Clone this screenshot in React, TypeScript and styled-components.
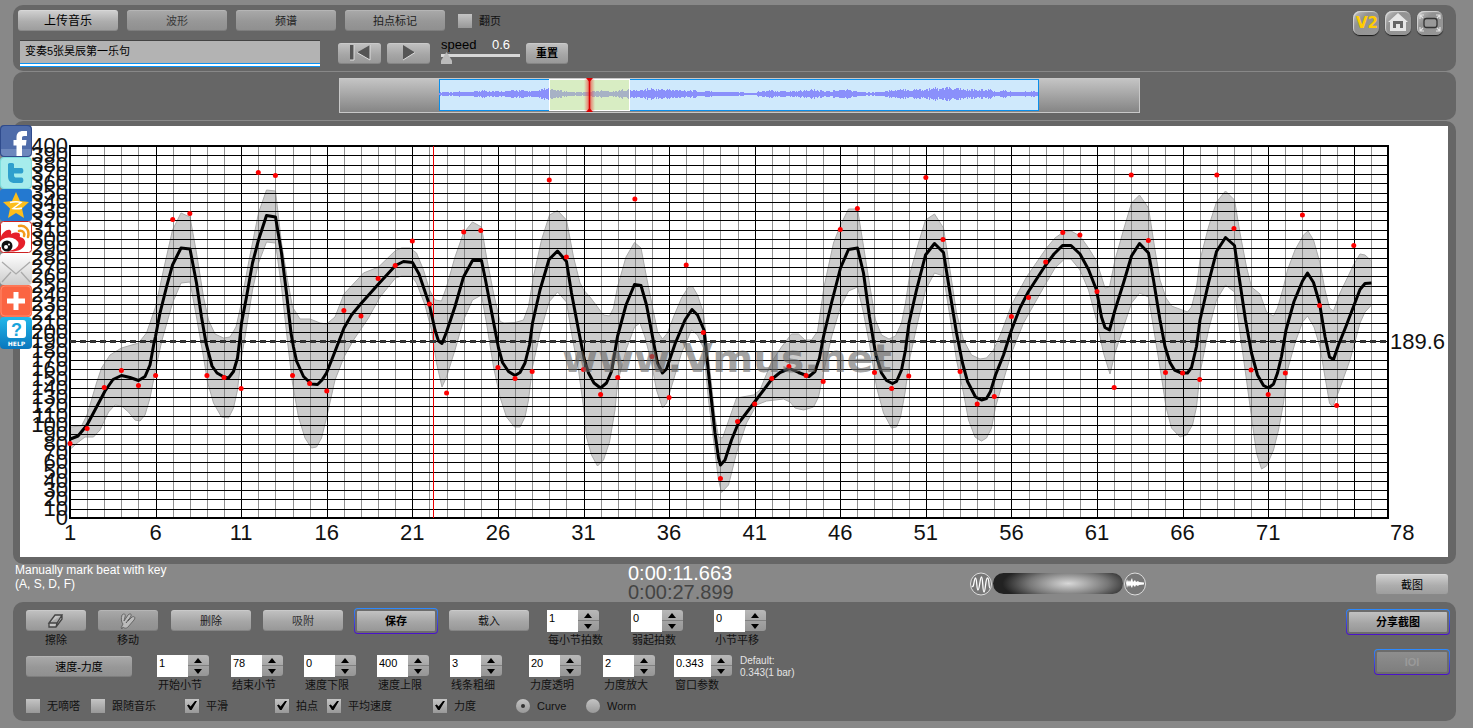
import React, { useState } from "react";
import styled, { createGlobalStyle, css } from "styled-components";

const GlobalStyle = createGlobalStyle`
  * { box-sizing: border-box; }
  body {
    margin: 0;
    background: #888;
    color: #000;
    font: 11px/16px "Liberation Sans", "Noto Sans CJK SC", sans-serif;
  }
  button, input { font: inherit; color: inherit; margin: 0; padding: 0; }
`;

/* ---------- layout ---------- */

const Page = styled.main`
  position: relative;
  display: flex;
  flex-direction: column;
  gap: 1px;
  padding: 5px 17px 7px 13px;
`;

const Panel = styled.section`
  background: #666;
  border-radius: 10px;
`;

const TopPanel = styled(Panel)`
  display: flex;
  justify-content: space-between;
  height: 66px;
  padding: 5px 13px 0 5px;
`;

const ToolRows = styled.div`
  display: flex;
  flex-direction: column;
  gap: 8px;
`;

const TabRow = styled.div`
  display: flex;
  align-items: center;
  gap: 9px;
`;

const PlayerRow = styled.div`
  display: flex;
  align-items: center;
  gap: 6px;
  height: 28px;
  padding-left: 2px;
`;

/* ---------- controls ---------- */

type Tone = "bright" | "normal" | "dim" | "off";

const tones: Record<Tone, string> = {
  bright: "linear-gradient(#d2d2d2, #adadad 55%, #9c9c9c)",
  normal: "linear-gradient(#c2c2c2, #a6a6a6 55%, #979797)",
  dim: "linear-gradient(#aaa, #979797 55%, #8f8f8f)",
  off: "linear-gradient(#8e8e8e, #7e7e7e)",
};

const Button = styled.button<{ $w: number; $tone?: Tone; $ink?: string; $halo?: boolean; $size?: number }>`
  display: flex;
  align-items: center;
  justify-content: center;
  flex: none;
  width: ${(p) => p.$w}px;
  height: 21px;
  border: 0;
  border-radius: 3px;
  background: ${(p) => tones[p.$tone ?? "normal"]};
  box-shadow: inset 0 1px 0 rgba(255, 255, 255, 0.15), inset 0 -1px 0 rgba(0, 0, 0, 0.12);
  color: ${(p) => p.$ink ?? "#000"};
  font-size: ${(p) => p.$size ?? 11}px;
  ${(p) =>
    p.$halo &&
    css`
      font-weight: bold;
      border: 2px solid #6c6c6c;
      height: 24px;
      background-clip: padding-box;
      background-origin: padding-box;
    `}
`;

const Halo = styled.span`
  display: flex;
  width: max-content;
  padding: 1px;
  border-radius: 4px;
  background: linear-gradient(#2d8cff, #4a10c8);
  ${Button} { border-radius: 3px; background-color: #6c6c6c; box-shadow: none; background-clip: border-box; }
`;

const Check = styled.input`
  position: relative;
  flex: none;
  appearance: none;
  width: 14px;
  height: 14px;
  background: linear-gradient(#c4c4c4, #989898);
  &:checked::before {
    content: "";
    position: absolute;
    inset: 2px 2px 3px 2px;
    background: #000;
    clip-path: polygon(0 48%, 18% 40%, 36% 62%, 80% 0, 100% 0, 46% 100%, 30% 100%);
  }
`;

const TurnCheck = styled(Check)`
  margin-left: 4px;
`;

const Radio = styled(Check)`
  border-radius: 50%;
  &:checked::before {
    inset: 5px;
    border-radius: 50%;
    background: #333;
    clip-path: none;
  }
`;

const CheckLabel = styled.label`
  display: flex;
  align-items: center;
  gap: 7px;
  line-height: 14px;
  white-space: nowrap;
  color: #111;
`;

const TitleInput = styled.input`
  width: 300px;
  height: 27px;
  margin-right: 12px;
  padding: 0 5px 7px;
  border: 0;
  border-top: 1px solid #444;
  background: linear-gradient(#b3b3b3 22px, #0a93f5 22px 23px, #fff 23px 25px, #0a93f5 25px);
`;

const SpeedBox = styled.div`
  display: flex;
  flex-direction: column;
  width: 79px;
  height: 30px;
  margin-left: 5px;
`;

const SpeedHead = styled.label`
  display: flex;
  justify-content: space-between;
  padding-right: 10px;
  font-size: 13px;
  line-height: 14px;
  output { color: #fff; }
`;

const SpeedRange = styled.input`
  appearance: none;
  width: 100%;
  height: 12px;
  background: linear-gradient(transparent 2px, #d8d8d8 2px 5px, transparent 5px);
  &::-webkit-slider-thumb {
    appearance: none;
    width: 11px;
    height: 12px;
    background: #bbb;
    clip-path: polygon(50% 0, 100% 70%, 100% 100%, 0 100%, 0 70%);
  }
`;

const CornerTools = styled.div`
  display: flex;
  gap: 6px;
  padding-top: 1px;
`;

const CornerButton = styled.button`
  width: 26px;
  height: 24px;
  border: 0;
  border-radius: 7px;
  background: linear-gradient(135deg, #c4c4c4, #929292 35%, #979797);
  box-shadow: 0 1px 1px #151515, inset 1px 1px 1px #d5d5d5;
  svg { display: block; }
`;

/* ---------- overview strip ---------- */

const OverviewPanel = styled(Panel)`
  display: flex;
  justify-content: center;
  height: 48px;
  padding: 6px 0 0 10px;
`;

const Overview = styled.div`
  width: 801px;
  height: 35px;
  padding-left: 99px;
  border: 1px solid #c8c8c8;
  background: linear-gradient(#c4c4c4, #858585);
  svg { display: block; overflow: visible; }
`;

/* ---------- chart ---------- */

const ChartPanel = styled(Panel)`
  padding: 5px 8px 7px 7px;
`;

const ChartSvg = styled.svg`
  display: block;
  width: 100%;
  background: #fff;
  font-family: "Liberation Sans", sans-serif;
`;

/* ---------- status bar ---------- */

const StatusBar = styled.div`
  display: grid;
  grid-template-columns: 613px 342px 1fr auto;
  height: 36px;
  padding: 0 8px 0 2px;
`;

const Hint = styled.p`
  margin: -2px 0 0;
  color: #fff;
  font-size: 12px;
  line-height: 14px;
`;

const Clock = styled.div`
  margin-top: -1px;
  color: #fff;
  font-size: 20px;
  line-height: 19px;
  div + div { color: #444; }
`;

const Zoomer = styled.div`
  display: flex;
  align-items: center;
  gap: 1px;
`;

const ZoomRange = styled.input`
  appearance: none;
  width: 130px;
  height: 21px;
  border-radius: 11px;
  background: radial-gradient(ellipse 66px 20px at 58% 50%, #d8d8d8, #777 60%, #222);
  &::-webkit-slider-thumb { appearance: none; width: 1px; height: 1px; }
`;

const SnapSlot = styled.div`
  padding-top: 9px;
`;

/* ---------- bottom panel ---------- */

const BottomPanel = styled(Panel)`
  display: flex;
  justify-content: space-between;
  height: 119px;
  padding: 8px 6px 0 13px;
`;

const ControlRows = styled.div`
  display: grid;
  grid-template-rows: 45px 44px 14px;
`;

const ActionRow = styled.div`
  display: grid;
  grid-template-columns: 72px 73px 92px 91px 95px 98px 84px 83px 52px;
`;

const ParamRow = styled.div`
  display: grid;
  grid-template-columns: 131px 74px 73px 73px 73px 79px 74px 71px 66px 70px;
  > button { margin-top: 1px; }
`;

const OptionRow = styled.div`
  display: grid;
  grid-template-columns: 65px 94px 90px 52px 106px 83px 70px 60px;
`;

const ToolStack = styled.label`
  display: flex;
  flex-direction: column;
  align-items: center;
  gap: 1px;
  width: 60px;
  color: #111;
`;

const HaloCell = styled.div`
  margin-top: -2px;
`;

const Field = styled.label`
  display: flex;
  flex-direction: column;
  color: #111;
  white-space: nowrap;
  > span:last-child { padding-left: 1px; }
`;

const SpinBody = styled.span`
  display: flex;
  height: 22px;
`;

const SpinInput = styled.input<{ $w: number }>`
  width: ${(p) => p.$w}px;
  height: 22px;
  padding: 0 0 6px 2px;
  border: 0;
  background: #fff;
  color: #000;
`;

const SpinKeys = styled.span`
  display: flex;
  flex-direction: column;
  width: 21px;
  height: 21px;
`;

const SpinKey = styled.button<{ $down?: boolean }>`
  display: flex;
  align-items: center;
  justify-content: center;
  height: ${(p) => (p.$down ? 11 : 10)}px;
  padding-right: 1px;
  border: 0;
  border-radius: ${(p) => (p.$down ? "0 0 3px 0" : "0 3px 0 0")};
  background: ${(p) => (p.$down ? "linear-gradient(#a3a3a3, #969696)" : "linear-gradient(#b8b8b8, #a8a8a8)")};
  border-top: ${(p) => (p.$down ? "1px solid #808080" : "0")};
`;

const DefaultNote = styled.p`
  margin: 0;
  color: #e4e4e4;
  font-size: 10px;
  line-height: 12px;
`;

const ShareColumn = styled.div`
  display: flex;
  flex-direction: column;
  align-items: flex-end;
  gap: 14px;
  margin-top: -1px;
`;

/* ---------- social links ---------- */

const SocialBar = styled.nav`
  position: absolute;
  left: 0;
  top: 125px;
  display: flex;
  flex-direction: column;
`;

const SocialLink = styled.a`
  display: block;
  width: 32px;
  height: 32px;
  svg { display: block; }
`;

/* ---------- chart data ---------- */

const curve =
  "70.5,439 78,436 87,425 95,410 105,391 113,379.5 121.5,375.5 130,377.5 138.5,380.5 145,376.5 150,365 154,343 155.5,336.5 160,313 166.5,287 172.5,265 181,248 190,249 196.5,283 201.5,317 206,343 212,366 217,373 224,377 228.5,378 233.5,371.5 237.5,358 239.5,342 241.5,323 246.5,297 252.5,263 258.5,240 266.5,215.5 275.5,217 281.5,253 286.5,293 291,333 293.5,347 296.5,361 303.5,376.5 311.5,384 317.5,384.5 322,380 326.5,373 335,351.5 344,328 351.5,315 361.5,303 378.5,284 395.5,265.5 403.5,261.5 412.5,262.5 419,274 429.5,305 435,330 438.5,341 442,343.5 446.5,332 455,306.5 463.5,277 472.5,260.5 481.5,260.5 485.5,280 491.5,311.5 498.5,348 502.5,362.5 508.5,371.5 515,375.5 520,372.5 525,363 529.5,345 532.5,323 540,290 549,259.5 557.5,251 566.5,261.5 571.5,293 578.5,330 584,358 588.5,373 594,383 600.5,388 606.5,383 611.5,371.5 617.5,336.5 626,305 634.5,284.5 641,285.5 646.5,305 652.5,336.5 657.5,363 662.5,373 666.5,369 675,344 685,320 692,309.5 697.5,315 704,330 710,387 715,433 718.5,458 720.5,465 725,460 731.5,440 738,424 755,401.5 771.5,379.5 780,372.5 789.5,368.5 798.5,372.5 809,376.5 815,371.5 819.5,358 823.5,336.5 831.5,303 840.5,268 848.5,249.5 857.5,248 863.5,273 869.5,317 875.5,353 881.5,373 886.5,380.5 892.5,383.5 896.5,381.5 901.5,370 905.5,350 909,323 916.5,290 925.5,255 934.5,243.5 943.5,252.5 950,293 956.5,333 962.5,363 967.5,381.5 975.5,397 981.5,400 986.5,398.5 990.5,391.5 995.5,375 1003.5,355 1011.5,330 1020,308 1028.5,291.5 1045,266 1054,254 1062.5,245.5 1071,245.5 1080,254 1088.5,269.5 1096.5,290 1101.5,317 1105,327.5 1109.5,330 1115,310 1123.5,283 1131.5,256 1139.5,243.5 1148.5,253 1153.5,280 1160,320 1165,346.5 1170,362.5 1174.5,370 1181.5,373 1187.5,373 1191.5,367.5 1196.5,346.5 1200,320 1208.5,283 1216.5,251.5 1225.5,237.5 1234.5,245.5 1240,283 1245.5,320 1251.5,353 1257.5,375 1263.5,385.5 1268.5,388 1273.5,384 1277.5,373 1281.5,356.5 1286,330 1294,301.5 1302.5,281 1307.5,273 1313.5,282.5 1319.5,303 1325,336.5 1329.5,357 1333.5,359.5 1338.5,345 1346.5,325 1360,289.5 1365,283.5 1371.5,283";

const bandTop =
  "70.5,427 81.5,426 87,415 96.5,383 101.5,368 110,355 121.5,348 138.5,343 146.5,333 155.5,307 163.5,270 172.5,230 181,213 190,217 196.5,253 203.5,297 208.5,320 215,334 223.5,338 230,337 236,327 240.5,307 248.5,263 258.5,213 266.5,190 275.5,191 281.5,243 287.5,280 292.5,307 300,319 310,319 320,323 326.5,324 335,317 344,294 363.5,273 378.5,267 395.5,250.5 401.5,248 410,248 416.5,253 423.5,270 429.5,290 435,300 441.5,301 446.5,287 455,257 463.5,233 472.5,222 481.5,227 486.5,257 493.5,293 500,321.5 504,323 515,322.5 523.5,320 528.5,306.5 533.5,276.5 541.5,240 549.5,215 557.5,210.5 566.5,220 573.5,257 580,283 584,290.5 590,297 603.5,315 609.5,316 613.5,308 617.5,287 626,257 634.5,242.5 641,248 646.5,277 652.5,307 657.5,331.5 662.5,339 667.5,333 673.5,317 681.5,298 688.5,287 692.5,286.5 697.5,295 703.5,313 708.5,357 715,417 718.5,437 722.5,438 728.5,421 736.5,398 753.5,395 760,390 771.5,362 781.5,347 791.5,334 798.5,334 805,340 811.5,340 817.5,331.5 824,287 833.5,243 840.5,225 848.5,209 857.5,209 862.5,240 870,287 875.5,320 881.5,335 889,339 895.5,336 901.5,323 905.5,303 910,273 918.5,243 925.5,220 934.5,214 943.5,228 950,270 956.5,313 963.5,340 971.5,355 980,359 986.5,358 993.5,350 1001.5,332 1011.5,305 1026.5,277 1046.5,248 1055,238 1063.5,232 1071,231 1080,236 1088.5,248 1096.5,261 1105,288 1109.5,287 1115,260 1123.5,230 1131.5,203 1139.5,195 1148.5,208 1155,250 1160,280 1166,298 1171.5,306 1187.5,312 1191.5,307 1196.5,287 1200,260 1208.5,227 1216.5,202 1225.5,191 1234.5,200 1240,233 1246.5,267 1251.5,287 1260,294 1266.5,312 1273.5,316 1277.5,308 1283.5,287 1287.5,270 1295,250 1303.5,235 1308,231 1313.5,240 1320,263 1325,290 1329.5,308 1333.5,311 1340,293 1353.5,265 1360,254 1365,255 1371.5,261";

const bandBottom =
  "70.5,449 78.5,442 85,437 93.5,437 100,430 108.5,412 115,405 121.5,406 128.5,412 135,420 140,421 145,415 150,398 155.5,370 161.5,342 172.5,303 181,283 190,282 196.5,317 203.5,357 207.5,382 213.5,403 221.5,417 228.5,418 233.5,408 237.5,390 240.5,363 245,337 252.5,290 258.5,263 266.5,242 275.5,243 281.5,287 288.5,350 292.5,383 298.5,417 305,438 311.5,448 316.5,447 321.5,438 326.5,418 335,380 344,357 353.5,340 368.5,318 380,297 395.5,278 401.5,276 411.5,276 416.5,283 425,305 431.5,330 436.5,363 442,387 446.5,377 455,350 463.5,320 472.5,300 481.5,295 486.5,323 493.5,367 500,397 506.5,417 514.5,427 520,427 525,417 528.5,400 532.5,367 540,333 549,302 557.5,292 566.5,302 571.5,333 578.5,370 583.5,407 586.5,437 591.5,455 597.5,466 603.5,460 609.5,442 615,410 617.5,383 626,350 634.5,327 640,323 645,337 651.5,363 656.5,390 662.5,408 666.5,403 673.5,380 681.5,353 691.5,330 697.5,335 703.5,348 708.5,400 713.5,440 718.5,480 721.5,492.5 728.5,485 736.5,453 746.5,423 756.5,405 766.5,401 783.5,399 790,402 795,408 803.5,410 813.5,407 818.5,397 824,370 831.5,337 840.5,307 848.5,291 857.5,287 863.5,313 870,347 876.5,387 883.5,413 891.5,428 896.5,427 900.5,417 905,393 910,357 917.5,323 925.5,290 934.5,273 943.5,276 950,317 956.5,360 963.5,393 968.5,420 975,437 981.5,441 986.5,438 991.5,428 995.5,407 1003.5,380 1011.5,353 1023.5,323 1045,285 1055,268 1064.5,259 1071,259 1080,270 1088.5,290 1096.5,320 1103.5,353 1110,374 1115,353 1123.5,327 1131.5,303 1139.5,293 1148.5,297 1155,337 1161.5,377 1166,407 1171.5,428 1180,437 1186.5,435 1192.5,425 1196.5,407 1200,373 1208.5,330 1216.5,300 1225.5,285 1234.5,292 1240,333 1246.5,380 1251.5,417 1256.5,453 1261.5,469 1266.5,466 1273.5,450 1278.5,430 1283.5,403 1287.5,370 1295,343 1302.5,322 1307.5,316 1314,327 1320,347 1325,377 1329.5,403 1332.5,407 1338.5,392 1350,360 1360,323 1365,312 1371.5,305";

const beatY = [
  443.5, 428.5, 387.5, 370.5, 385.5, 375.5, 219.5, 213.5, 375.5, 377.5, 388.5, 172.5, 175.5, 375.5, 383.5, 391, 310.5,
  316, 278.5, 265.5, 241, 304, 393, 232, 230.5, 367.5, 378.5, 371.5, 180, 257, 369.5, 394.5, 377.5, 199, 356.5, 397.5,
  265, 332.5, 478.5, 421.5, 404, 378.5, 366.5, 375.5, 381.5, 229.5, 208.5, 372.5, 388.5, 376, 177.5, 239.5, 371.5, 404,
  396.5, 316.5, 297.5, 262, 232.5, 235, 291.5, 387.5, 175, 240.5, 372.5, 373, 379.5, 175, 228.5, 370, 394.5, 373, 215,
  305.5, 405.5, 245.5,
];

const LEFT = 70;
const RIGHT = 1388;
const TOP = 146;
const BOTTOM = 518;
const beatX = (beat: number) => LEFT + ((beat - 1) * (RIGHT - LEFT)) / 77;
const tempoY = (tempo: number) => BOTTOM - (tempo * (BOTTOM - TOP)) / 400;
const range = (n: number) => Array.from({ length: n }, (_, i) => i);

function TempoChart() {
  const area = `${bandTop} ${bandBottom.split(" ").reverse().join(" ")}`;
  return (
    <ChartSvg viewBox="20 126 1428 431" role="img" aria-label="Tempo curve">
      <polygon points={area} fill="#ccc" stroke="#aaa" strokeWidth="1" />
      <g shapeRendering="crispEdges">
        {range(76).map((i) => {
          const x = Math.round(beatX(i + 2));
          const major = (i + 1) % 5 === 0;
          return (
            <line key={i} x1={x + 0.5} x2={x + 0.5} y1={TOP} y2={BOTTOM} stroke={major ? "#000" : "#777"} strokeOpacity={major ? 1 : 0.8} />
          );
        })}
        {range(39).map((i) => {
          const y = Math.round(tempoY((i + 1) * 10));
          return <line key={i} x1={LEFT} x2={RIGHT} y1={y + 0.5} y2={y + 0.5} stroke="#000" />;
        })}
        <rect x={LEFT} y={TOP} width={RIGHT - LEFT} height={BOTTOM - TOP} fill="none" stroke="#000" strokeWidth="2" />
        <line x1="433.5" x2="433.5" y1={TOP} y2={BOTTOM} stroke="#e00" />
      </g>
      <line x1={LEFT} x2={RIGHT} y1="341.5" y2="341.5" stroke="#333" strokeWidth="3" strokeDasharray="6 4" />
      <polyline points={curve} fill="none" stroke="#000" strokeWidth="3" strokeLinejoin="round" />
      {beatY.map((y, i) => (
        <circle key={i} cx={beatX(i + 1)} cy={y} r="2.5" fill="#f00" />
      ))}
      <text x="562" y="372" fontFamily="DejaVu Sans" fontWeight="bold" fontSize="39" fill="#666" fillOpacity="0.6">
        www.Vmus.net
      </text>
      <g fontSize="22" fill="#111">
        {range(41).map((i) => (
          <text key={i} x="68" y={tempoY(i * 10) + 7} textAnchor="end">
            {i * 10}
          </text>
        ))}
        {range(15).map((i) => (
          <text key={i} x={beatX(i * 5 + 1)} y="540" textAnchor="middle">
            {i * 5 + 1}
          </text>
        ))}
        <text x="1390" y="540">78</text>
        <text x="1390" y="349">189.6</text>
      </g>
    </ChartSvg>
  );
}

/* Loudness envelope of the recording: position in px, half height in px */
const envelope: [number, number][] = [
  [0, 1], [16, 1], [20, 2], [27, 1], [43, 3], [63, 2], [74, 3], [85, 3], [97, 2], [105, 5], [120, 3], [131, 1], [145, 1],
  [150, 2], [163, 3], [176, 2], [184, 4], [199, 3], [210, 5], [225, 4], [256, 3], [262, 1], [268, 3], [278, 1], [291, 2],
  [299, 1], [314, 0], [320, 2], [335, 3], [351, 2], [372, 4], [385, 2], [406, 4], [424, 1], [440, 1], [450, 3], [466, 4],
  [490, 5], [508, 6], [529, 4], [550, 4], [558, 1], [565, 3], [576, 1], [591, 2], [600, 1],
];

function envelopeAt(x: number) {
  for (let i = 1; i < envelope.length; i++) {
    const [x1, a1] = envelope[i];
    if (x <= x1) {
      const [x0, a0] = envelope[i - 1];
      return a0 + ((a1 - a0) * (x - x0)) / (x1 - x0);
    }
  }
  return 1;
}

function wavePath() {
  let d = "";
  for (let x = 0; x < 599; x++) {
    const noise = Math.abs(Math.sin(x * 12.9898) * 43758.5453) % 1;
    const a = Math.round(envelopeAt(x) * (0.4 + 0.65 * noise));
    d += `M${x + 0.5} ${14 - a}V${16 + a}`;
  }
  return d;
}

function OverviewWave() {
  return (
    <svg width="600" height="33" viewBox="0 0 600 33" aria-label="Recording overview" role="img">
      <defs>
        <linearGradient id="glow">
          <stop offset="0" stopColor="#e33" stopOpacity="0" />
          <stop offset="0.5" stopColor="#e33" stopOpacity="0.7" />
          <stop offset="1" stopColor="#e33" stopOpacity="0" />
        </linearGradient>
      </defs>
      <rect x="0.5" y="0.5" width="599" height="31" fill="#cfe9fc" stroke="#0a8eea" />
      <path d={wavePath()} stroke="#8a90fb" fill="none" />
      <rect x="110.5" y="0.5" width="80" height="31" fill="#daedb4" fillOpacity="0.8" stroke="#fff" />
      <path d={wavePath()} stroke="#8a90c8" strokeOpacity="0.55" fill="none" clipPath="inset(0 409px 0 111px)" />
      <rect x="145" y="0" width="11" height="32" fill="url(#glow)" />
      <path d="M150.500 0V32" stroke="#d00" strokeWidth="1.500" />
      <path d="M147-1h7l-3.500 4zM147 33h7l-3.500-4z" fill="#d00" />
    </svg>
  );
}

/* ---------- small parts ---------- */

function Spin({ label, value, wide }: { label: string; value: string; wide?: boolean }) {
  const [v, setV] = useState(value);
  const step = (d: number) => setV(String(Number(v) + d));
  return (
    <Field>
      <SpinBody>
        <SpinInput $w={wide ? 37 : 31} value={v} onChange={(e) => setV(e.target.value)} />
        <SpinKeys>
          <SpinKey type="button" aria-label="+" onClick={() => step(1)}>
            <svg width="8" height="5"><path d="M0 5L4 0l4 5z" /></svg>
          </SpinKey>
          <SpinKey type="button" $down aria-label="-" onClick={() => step(-1)}>
            <svg width="8" height="5"><path d="M0 0l4 5 4-5z" /></svg>
          </SpinKey>
        </SpinKeys>
      </SpinBody>
      <span>{label}</span>
    </Field>
  );
}

function Option({ label, on }: { label: string; on?: boolean }) {
  return (
    <CheckLabel>
      <Check type="checkbox" defaultChecked={on} />
      {label}
    </CheckLabel>
  );
}

function SocialLinks() {
  return (
    <SocialBar aria-label="Share">
      <SocialLink href="#facebook" aria-label="Facebook">
        <svg width="32" height="32">
          <rect width="32" height="32" rx="4" fill="#2f4b8c" />
          <rect x="1" y="1" width="30" height="30" rx="4" fill="#4f6caa" />
          <path d="M1 24h30v3a4 4 0 0 1-4 4H5a4 4 0 0 1-4-4z" fill="#6d88bd" />
          <path d="M16.500 31V20.500h-3V15h3v-2.500c0-4.500 2.500-6.500 6.500-6.500h4v5h-3c-1.500 0-2 .8-2 2V15h4.500l-.6 5.500H22V31z" fill="#fff" />
        </svg>
      </SocialLink>
      <SocialLink href="#twitter" aria-label="Twitter">
        <svg width="32" height="32">
          <rect width="32" height="32" rx="4" fill="#7fdede" />
          <rect x="1" y="1" width="30" height="30" rx="4" fill="#a6ecec" />
          <path d="M8 7c0-1.500 6-1.500 6 0v4h7.500c2.500 0 2.500 5.500 0 5.500H14V18c0 2 1 2.500 2.500 2.500h5c2.500 0 2.500 5.500 0 5.500H15c-5 0-7-2.500-7-7z" fill="#2f9fcd" />
        </svg>
      </SocialLink>
      <SocialLink href="#qzone" aria-label="Qzone">
        <svg width="32" height="32">
          <rect width="32" height="32" rx="3" fill="#2479d0" />
          <path d="M16 3l4 9 9 1-7 6.500 2 9.500-8-5-8 5 2-9.500L3 13l9-1z" fill="#fcbe1c" />
          <path d="M10 13.500c4-1 8-1 11 0l-8 6c3 .6 6 .5 9-.5" fill="none" stroke="#fff" strokeWidth="1.500" />
        </svg>
      </SocialLink>
      <SocialLink href="#weibo" aria-label="Weibo">
        <svg width="32" height="32">
          <rect x="0.500" y="0.500" width="31" height="31" rx="3" fill="#fff" stroke="#c22" />
          <path d="M1 16C2 12 7 8 10 9c2 1 1 3 1 4 4-2 9-2 9 1 0 1-.5 2 0 2 4 1 6 4 5 7-1 5-7 7.500-14 7.500S1 28 1 24z" fill="#e6202a" />
          <ellipse cx="9" cy="23" rx="9.500" ry="6.500" fill="#fff" />
          <circle cx="7" cy="25" r="5.500" fill="#111" />
          <circle cx="6" cy="26" r="2" fill="#fff" />
          <circle cx="9" cy="23.500" r="1" fill="#fff" />
          <path d="M19 5c6-1.500 11 4 9 11M19 10c4-1 6 2 5 5" fill="none" stroke="#f29a1c" strokeWidth="2.500" strokeLinecap="round" />
        </svg>
      </SocialLink>
      <SocialLink href="#mail" aria-label="Email">
        <svg width="32" height="32">
          <defs>
            <linearGradient id="mail" x2="0" y2="1">
              <stop stopColor="#fff" />
              <stop offset="1" stopColor="#ccc" />
            </linearGradient>
          </defs>
          <rect width="32" height="32" rx="4" fill="url(#mail)" />
          <path d="M2 9l14 12L30 9M2 29l9-10M30 29l-9-10" fill="none" stroke="#aaa" strokeWidth="1.300" />
        </svg>
      </SocialLink>
      <SocialLink href="#more" aria-label="More">
        <svg width="32" height="32">
          <rect width="32" height="32" rx="4" fill="#fb6442" />
          <rect x="1" y="1" width="30" height="30" rx="4" fill="none" stroke="#ff8a6c" />
          <path d="M16 7v18M7 16h18" stroke="#fff" strokeWidth="5" />
        </svg>
      </SocialLink>
      <SocialLink href="#help" aria-label="Help">
        <svg width="32" height="32">
          <defs>
            <linearGradient id="help" x2="0" y2="1">
              <stop stopColor="#22b8ea" />
              <stop offset="1" stopColor="#0a76bd" />
            </linearGradient>
          </defs>
          <rect width="32" height="32" rx="4" fill="url(#help)" />
          <rect x="7" y="3" width="19" height="18" rx="3" fill="#fff" />
          <text x="16.500" y="18.500" textAnchor="middle" fontSize="18" fontWeight="bold" fill="#18a5dc">?</text>
          <text x="16.500" y="29" textAnchor="middle" fontSize="6" fontWeight="bold" fill="#fff" fontFamily="DejaVu Sans">HELP</text>
        </svg>
      </SocialLink>
    </SocialBar>
  );
}

export default function App() {
  const [speed, setSpeed] = useState("0.6");
  return (
    <>
      <GlobalStyle />
      <Page>
        <TopPanel>
          <ToolRows>
            <TabRow>
              <Button $w={100} $tone="bright" $size={12}>上传音乐</Button>
              <Button $w={100} $tone="dim" $ink="#3a3a3a">波形</Button>
              <Button $w={100} $tone="dim" $ink="#222">频谱</Button>
              <Button $w={100} $tone="dim" $ink="#222">拍点标记</Button>
              <CheckLabel>
                <TurnCheck type="checkbox" />
                翻页
              </CheckLabel>
            </TabRow>
            <PlayerRow>
              <TitleInput aria-label="Title" defaultValue="变奏5张昊辰第一乐句" />
              <Button $w={43} aria-label="Back to start">
                <svg width="24" height="18" viewBox="0 0 24 18">
                  <path d="M2 1h4v15H2zM22 1v15L9 8.500z" fill="#555" />
                  <path d="M6 1v15H2M22 1v15L9 8.500" fill="none" stroke="#ddd" />
                </svg>
              </Button>
              <Button $w={43} aria-label="Play">
                <svg width="14" height="18" viewBox="0 0 14 18">
                  <path d="M1 1v15l12-7.500z" fill="#555" />
                  <path d="M1 16l12-7.500" stroke="#ddd" />
                </svg>
              </Button>
              <SpeedBox>
                <SpeedHead htmlFor="speed">
                  speed <output>{speed}</output>
                </SpeedHead>
                <SpeedRange
                  id="speed"
                  type="range"
                  min="0.6"
                  max="2"
                  step="0.1"
                  value={speed}
                  onChange={(e) => setSpeed(e.target.value)}
                />
              </SpeedBox>
              <Button $w={42}><b>重置</b></Button>
            </PlayerRow>
          </ToolRows>
          <CornerTools>
            <CornerButton aria-label="Version 2">
              <svg width="26" height="24">
                <text x="14" y="17" textAnchor="middle" fontSize="15" fontWeight="bold" fontFamily="DejaVu Sans" fill="#fc0">V2</text>
              </svg>
            </CornerButton>
            <CornerButton aria-label="Home">
              <svg width="26" height="24">
                <path d="M13 2L3 11h2v9h16v-9h2z" fill="#e6e6e6" />
                <path d="M8 17v-7h10v7h-3v-4h-4v4z" fill="#666" />
              </svg>
            </CornerButton>
            <CornerButton aria-label="Full screen">
              <svg width="26" height="24">
                <rect x="7" y="7.500" width="13" height="9" rx="2.500" fill="#999" stroke="#333" strokeWidth="1.300" />
                <path d="M3 8V4h4M19 4h4v4M3 16v4h4M23 16v4h-4M3 4l3 3M23 4l-3 3M3 20l3-3M23 20l-3-3" fill="none" stroke="#e0e0e0" strokeWidth="1.200" />
              </svg>
            </CornerButton>
          </CornerTools>
        </TopPanel>

        <OverviewPanel>
          <Overview>
            <OverviewWave />
          </Overview>
        </OverviewPanel>

        <ChartPanel>
          <TempoChart />
        </ChartPanel>

        <StatusBar>
          <Hint>
            Manually mark beat with key
            <br />
            (A, S, D, F)
          </Hint>
          <Clock>
            <div>0:00:11.663</div>
            <div>0:00:27.899</div>
          </Clock>
          <Zoomer>
            <svg width="22" height="24">
              <ellipse cx="11" cy="12" rx="10.500" ry="11" fill="#777" stroke="#ddd" />
              <path d="M2 14c2 3 2-8 3.500-8s1 12 2.500 12S10 5 11.500 5s1 15 2.500 15S15.500 6 17.500 6s1 10 2.500 10" fill="none" stroke="#fff" strokeWidth="1.300" />
            </svg>
            <ZoomRange type="range" aria-label="Zoom" />
            <svg width="22" height="24">
              <ellipse cx="11" cy="12" rx="10.500" ry="11" fill="#777" stroke="#ddd" />
              <path d="M2 11l1-4 1 3 1-2 1 2 2-4 1 4 2-2 1 2 2-1 1 1 5 .5v2l-5 .5-1 1-2-1-1 2-2-2-1 3-2-3-1 2-1-2-1 3z" fill="#fff" />
            </svg>
          </Zoomer>
          <SnapSlot>
            <Button $w={72} $tone="bright">截图</Button>
          </SnapSlot>
        </StatusBar>

        <BottomPanel>
          <ControlRows>
            <ActionRow>
              <ToolStack>
                <Button $w={60}>
                  <svg width="18" height="16" viewBox="0 0 18 16">
                    <path d="M2 10L8 2h7l-5 8zM2 10v4h7l6-8V2M10 10l-1 4" fill="#c4c4c4" stroke="#444" strokeWidth="1.300" />
                  </svg>
                </Button>
                擦除
              </ToolStack>
              <ToolStack>
                <Button $w={60} $tone="dim">
                  <svg width="18" height="18" viewBox="0 0 18 18">
                    <path d="M2 16l2-4C2 10 2 6 3 3c2-2 4-1 3 2l-1 4 4-6c2-2 4-1 3 1l-3 5 4-4c2-1 4 0 2 3l-6 7c-2 2-4 1-5 0l-1 2z" fill="#bbb" stroke="#666" />
                    <path d="M7 11l3-4" stroke="#555" />
                  </svg>
                </Button>
                移动
              </ToolStack>
              <Button $w={80} $ink="#222">删除</Button>
              <Button $w={80} $ink="#333">吸附</Button>
              <HaloCell>
                <Halo>
                  <Button $w={82} $halo>保存</Button>
                </Halo>
              </HaloCell>
              <Button $w={80} $ink="#111">载入</Button>
              <Spin label="每小节拍数" value="1" />
              <Spin label="弱起拍数" value="0" />
              <Spin label="小节平移" value="0" />
            </ActionRow>
            <ParamRow>
              <Button $w={106} $tone="dim">速度-力度</Button>
              <Spin label="开始小节" value="1" />
              <Spin label="结束小节" value="78" />
              <Spin label="速度下限" value="0" />
              <Spin label="速度上限" value="400" />
              <Spin label="线条粗细" value="3" />
              <Spin label="力度透明" value="20" />
              <Spin label="力度放大" value="2" />
              <Spin label="窗口参数" value="0.343" wide />
              <DefaultNote>
                Default:
                <br />
                0.343(1 bar)
              </DefaultNote>
            </ParamRow>
            <OptionRow>
              <Option label="无嘀嗒" />
              <Option label="跟随音乐" />
              <Option label="平滑" on />
              <Option label="拍点" on />
              <Option label="平均速度" on />
              <Option label="力度" on />
              <CheckLabel>
                <Radio type="radio" name="view" defaultChecked />
                Curve
              </CheckLabel>
              <CheckLabel>
                <Radio type="radio" name="view" />
                Worm
              </CheckLabel>
            </OptionRow>
          </ControlRows>
          <ShareColumn>
            <Halo>
              <Button $w={102} $halo>分享截图</Button>
            </Halo>
            <Halo>
              <Button $w={74} $halo $tone="off" $ink="#9a9a9a" disabled>IOI</Button>
            </Halo>
          </ShareColumn>
        </BottomPanel>
        <SocialLinks />
      </Page>
    </>
  );
}
